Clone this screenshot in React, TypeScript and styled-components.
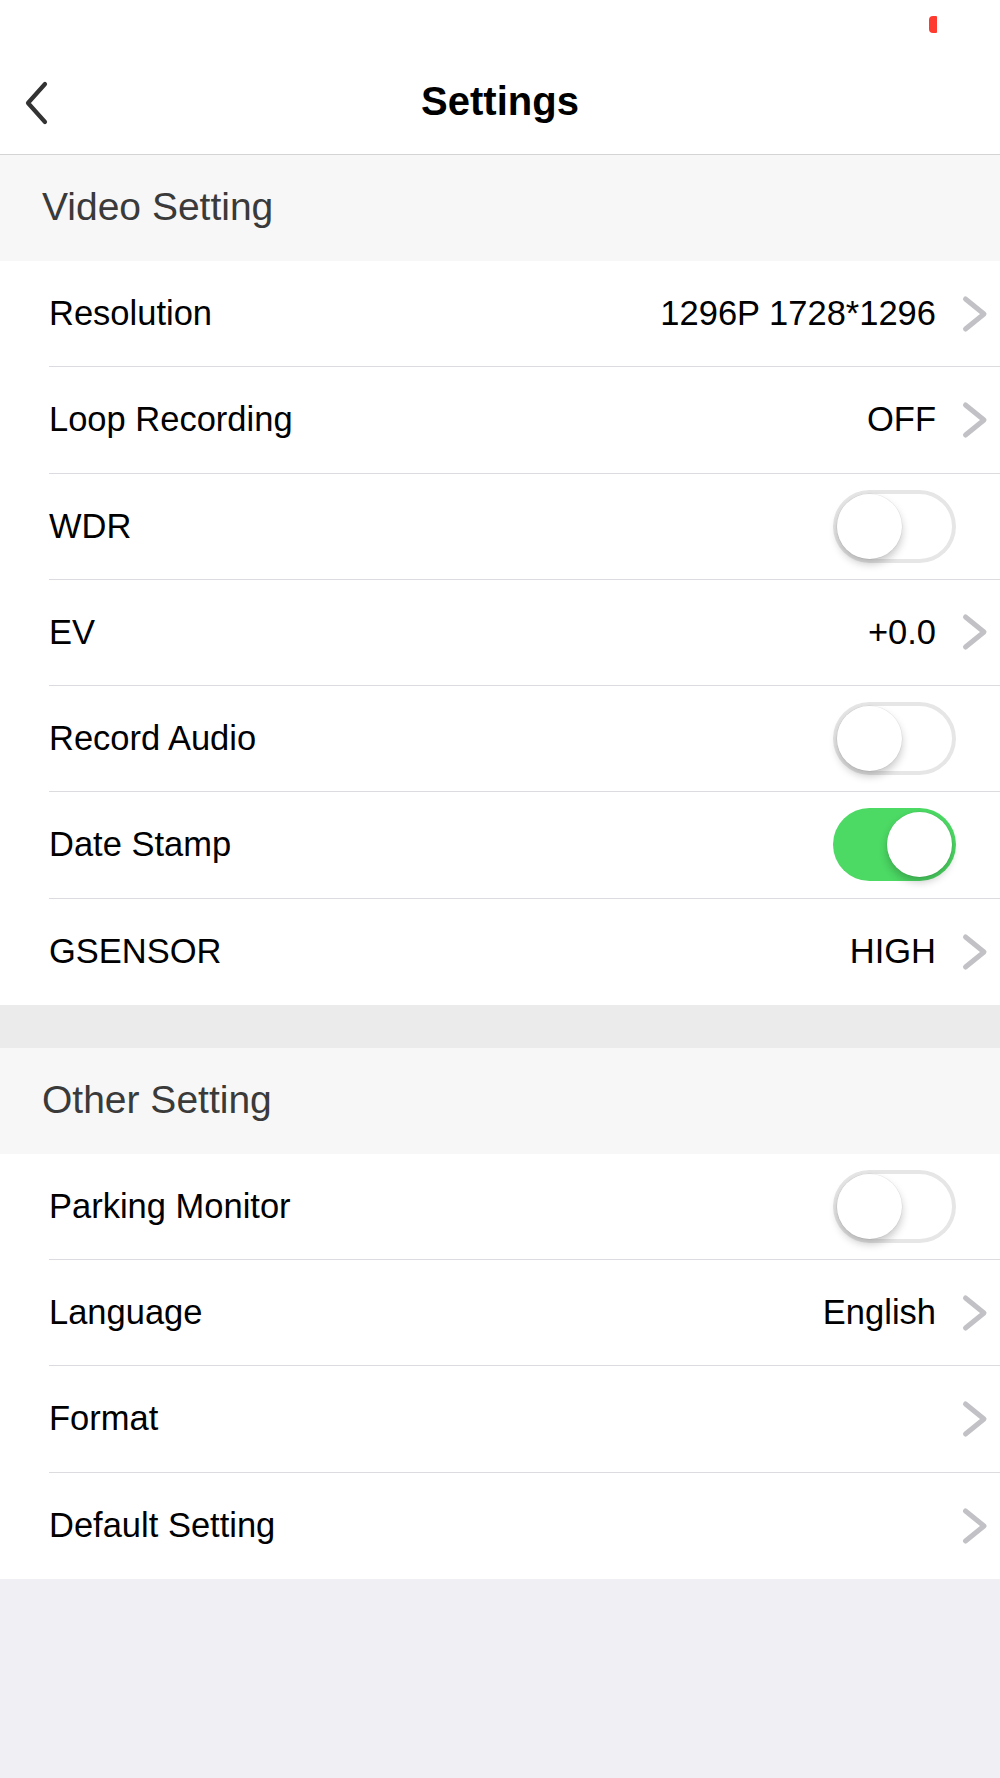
import React from "react";
import styled, { createGlobalStyle } from "styled-components";

const GlobalStyle = createGlobalStyle`
  html, body {
    margin: 0;
    padding: 0;
    background: #efeff4;
  }
  * {
    box-sizing: border-box;
  }
`;

type RowItem = {
  label: string;
  value?: string;
  toggle?: boolean;
  on?: boolean;
};

const videoRows: RowItem[] = [
  { label: "Resolution", value: "1296P 1728*1296" },
  { label: "Loop Recording", value: "OFF" },
  { label: "WDR", toggle: true, on: false },
  { label: "EV", value: "+0.0" },
  { label: "Record Audio", toggle: true, on: false },
  { label: "Date Stamp", toggle: true, on: true },
  { label: "GSENSOR", value: "HIGH" },
];

const otherRows: RowItem[] = [
  { label: "Parking Monitor", toggle: true, on: false },
  { label: "Language", value: "English" },
  { label: "Format", value: "" },
  { label: "Default Setting", value: "" },
];

const Chevron = () => (
  <ChevronSvg viewBox="0 0 28 38" width={28} height={38}>
    <path
      d="M4.5 4 L23 19 L4.5 34"
      fill="none"
      stroke="#c2c2c6"
      strokeWidth={5}
      strokeLinecap="round"
      strokeLinejoin="round"
    />
  </ChevronSvg>
);

const BackIcon = () => (
  <svg viewBox="0 0 26 44" width={26} height={44}>
    <path
      d="M21 3 L4 22 L21 41"
      fill="none"
      stroke="#333"
      strokeWidth={4.2}
      strokeLinecap="round"
      strokeLinejoin="round"
    />
  </svg>
);

const SettingsRow: React.FC<{ item: RowItem; last: boolean }> = ({ item, last }) => (
  <Row>
    <RowInner $last={last}>
      <Label>{item.label}</Label>
      {item.toggle ? (
        <Switch $on={!!item.on}>
          <Knob $on={!!item.on} />
        </Switch>
      ) : (
        <>
          <Value>{item.value}</Value>
          <Chevron />
        </>
      )}
    </RowInner>
  </Row>
);

const App: React.FC = () => {
  return (
    <Page>
      <GlobalStyle />
      <StatusBar>
        <Battery />
      </StatusBar>
      <NavBar>
        <BackButton>
          <BackIcon />
        </BackButton>
        <Title>Settings</Title>
      </NavBar>

      <SectionHeader>Video Setting</SectionHeader>
      <Group>
        {videoRows.map((r, i) => (
          <SettingsRow key={r.label} item={r} last={i === videoRows.length - 1} />
        ))}
      </Group>

      <Spacer />

      <SectionHeader>Other Setting</SectionHeader>
      <Group>
        {otherRows.map((r, i) => (
          <SettingsRow key={r.label} item={r} last={i === otherRows.length - 1} />
        ))}
      </Group>
    </Page>
  );
};

const Page = styled.div`
  width: 1000px;
  min-height: 1778px;
  background: #efeff4;
  font-family: "Liberation Sans", Arial, sans-serif;
  display: flex;
  flex-direction: column;
`;

const StatusBar = styled.div`
  height: 48px;
  background: #fff;
  display: flex;
  justify-content: flex-end;
  align-items: flex-start;
  padding: 16px 63px 0 0;
`;

const Battery = styled.div`
  width: 8px;
  height: 17px;
  background: #ff3b30;
  border-radius: 4px 1px 1px 4px;
`;

const NavBar = styled.div`
  position: relative;
  height: 107px;
  background: #fff;
  border-bottom: 1px solid #d4d4d4;
  display: flex;
  align-items: center;
  justify-content: center;
`;

const BackButton = styled.div`
  position: absolute;
  left: 24px;
  top: 33px;
  display: flex;
`;

const Title = styled.div`
  font-size: 40px;
  font-weight: 700;
  color: #000;
  margin-top: 0;
`;

const SectionHeader = styled.div`
  height: 106px;
  background: #f7f7f7;
  display: flex;
  align-items: center;
  padding-left: 42px;
  font-size: 39px;
  color: #3a3a3a;
  padding-bottom: 2px;
`;

const Group = styled.div`
  background: #fff;
  display: flex;
  flex-direction: column;
`;

const Row = styled.div`
  height: 106.25px;
  padding-left: 49px;
  display: flex;
`;

const RowInner = styled.div<{ $last: boolean }>`
  flex: 1;
  display: flex;
  align-items: center;
  padding-right: 11px;
  border-bottom: ${(p) => (p.$last ? "none" : "1px solid #dcdce0")};
`;

const Label = styled.div`
  flex: 1;
  font-size: 34.5px;
  color: #000;
`;

const Value = styled.div`
  font-size: 34.5px;
  color: #000;
  margin-right: 25px;
`;

const ChevronSvg = styled.svg`
  display: block;
`;

const Switch = styled.div<{ $on: boolean }>`
  position: relative;
  width: 123px;
  height: 73px;
  border-radius: 37px;
  margin-right: 33px;
  background: ${(p) => (p.$on ? "#4cd964" : "#fff")};
  box-shadow: ${(p) => (p.$on ? "none" : "inset 0 0 0 4px #e6e6e6")};
`;

const Knob = styled.div<{ $on: boolean }>`
  position: absolute;
  top: 4px;
  left: ${(p) => (p.$on ? "54px" : "4px")};
  width: 65px;
  height: 65px;
  border-radius: 50%;
  background: #fff;
  box-shadow: 0 5px 9px rgba(0, 0, 0, 0.22), 0 0 0 0.5px rgba(0, 0, 0, 0.08);
`;

const Spacer = styled.div`
  height: 43px;
  background: #ebebeb;
`;

export default App;
